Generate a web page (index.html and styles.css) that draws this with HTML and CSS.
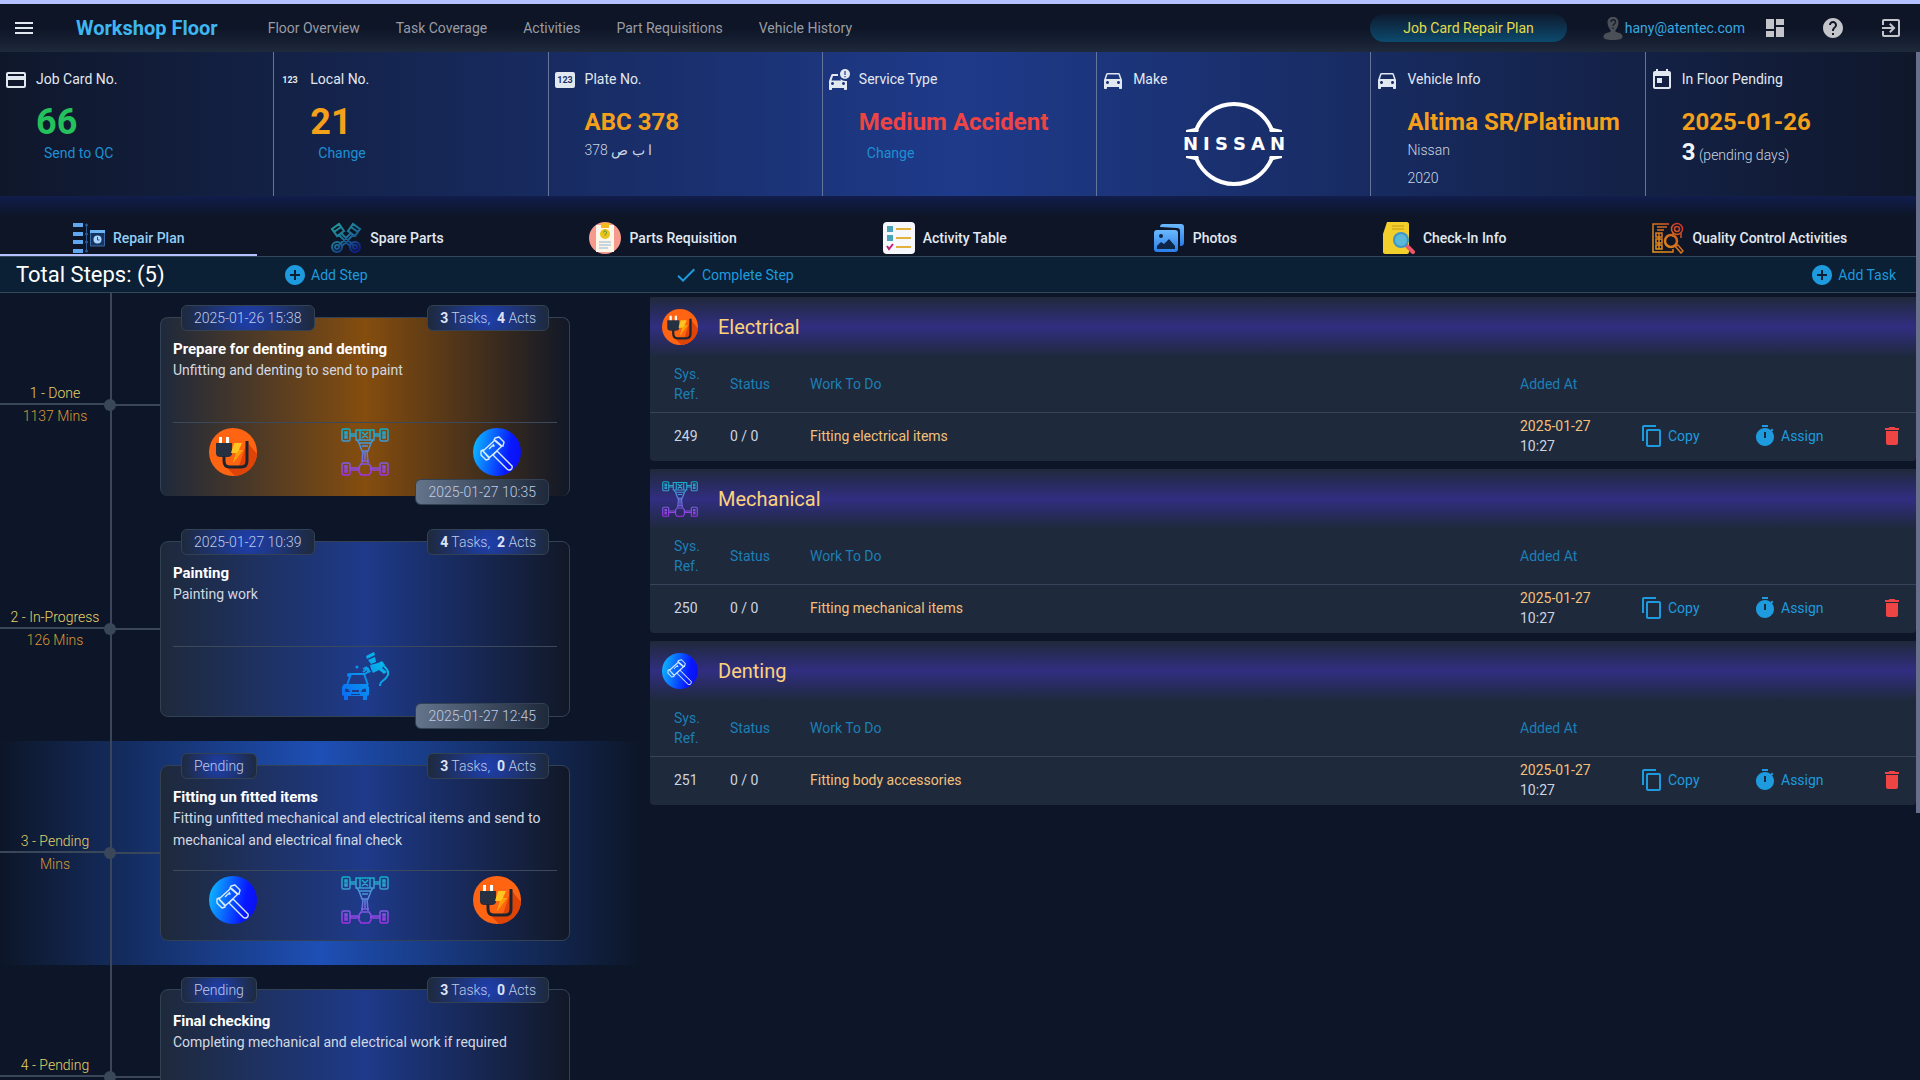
FILE: index.html
```
<!DOCTYPE html>
<html lang="en">

<head>
    <meta charset="UTF-8">
    <meta name="viewport" content="width=device-width, initial-scale=1.0">
    <title>Workshop Floor</title>
    <link rel="stylesheet" href="styles.css">
</head>

<body>
    <!-- shared icons -->
    <svg class="sprite" width="0" height="0" aria-hidden="true">
        <defs>
            <linearGradient id="g-axle" gradientUnits="userSpaceOnUse" x1="0" y1="0" x2="0" y2="48">
                <stop offset="0" stop-color="#0fb0c4" />
                <stop offset="0.45" stop-color="#5b8be0" />
                <stop offset="1" stop-color="#a32ee6" />
            </linearGradient>
            <linearGradient id="g-dent" x1="0" y1="0.4" x2="1" y2="0.6">
                <stop offset="0" stop-color="#0cb4ff" />
                <stop offset="0.75" stop-color="#0818ff" />
                <stop offset="1" stop-color="#0a10f0" />
            </linearGradient>
            <linearGradient id="g-paint" gradientUnits="userSpaceOnUse" x1="0" y1="44" x2="40" y2="10">
                <stop offset="0" stop-color="#0a6cf5" />
                <stop offset="1" stop-color="#08b4ea" />
            </linearGradient>
            <linearGradient id="g-piston" gradientUnits="userSpaceOnUse" x1="6" y1="2" x2="24" y2="30">
                <stop offset="0" stop-color="#1f9a9c" />
                <stop offset="0.5" stop-color="#1c6f95" />
                <stop offset="1" stop-color="#10208c" />
            </linearGradient>
            <linearGradient id="g-photo" x1="0" y1="0" x2="0" y2="1">
                <stop offset="0" stop-color="#6ab8ff" />
                <stop offset="1" stop-color="#2b7de8" />
            </linearGradient>
            <linearGradient id="g-quality" gradientUnits="userSpaceOnUse" x1="0" y1="32" x2="32" y2="0">
                <stop offset="0" stop-color="#e8a01c" />
                <stop offset="0.6" stop-color="#d2691e" />
                <stop offset="1" stop-color="#d02030" />
            </linearGradient>
        </defs>

        <symbol id="i-add" viewBox="0 0 24 24">
            <path d="M12 2C6.48 2 2 6.48 2 12s4.48 10 10 10 10-4.48 10-10S17.52 2 12 2zm5 11h-4v4h-2v-4H7v-2h4V7h2v4h4v2z" />
        </symbol>
        <symbol id="i-car" viewBox="0 0 24 24">
            <path d="M18.92 6.01C18.72 5.42 18.16 5 17.5 5h-11c-.66 0-1.21.42-1.42 1.01L3 12v8c0 .55.45 1 1 1h1c.55 0 1-.45 1-1v-1h12v1c0 .55.45 1 1 1h1c.55 0 1-.45 1-1v-8l-2.08-5.99zM6.5 16c-.83 0-1.5-.67-1.5-1.5S5.67 13 6.5 13s1.5.67 1.5 1.5S7.33 16 6.5 16zm11 0c-.83 0-1.5-.67-1.5-1.5s.67-1.5 1.5-1.5 1.5.67 1.5 1.5-.67 1.5-1.5 1.5zM5 11l1.5-4.5h11L19 11H5z" />
        </symbol>
        <symbol id="i-copy" viewBox="0 0 24 24">
            <path d="M16 1H4c-1.1 0-2 .9-2 2v14h2V3h12V1zm3 4H8c-1.1 0-2 .9-2 2v14c0 1.1.9 2 2 2h11c1.1 0 2-.9 2-2V7c0-1.1-.9-2-2-2zm0 16H8V7h11v14z" />
        </symbol>
        <symbol id="i-timer" viewBox="0 0 24 24">
            <path d="M9 1h6v2H9zM19.03 7.39l1.42-1.42c-.43-.51-.9-.99-1.41-1.41l-1.42 1.42C16.07 4.74 14.12 4 12 4c-4.97 0-9 4.03-9 9s4.02 9 9 9 9-4.03 9-9c0-2.12-.74-4.07-1.97-5.61zM13 14h-2V8h2v6z" />
        </symbol>
        <symbol id="i-trash" viewBox="0 0 24 24">
            <path d="M6 19c0 1.1.9 2 2 2h8c1.1 0 2-.9 2-2V7H6v12zM19 4h-3.5l-1-1h-5l-1 1H5v2h14V4z" />
        </symbol>

        <symbol id="i-electrical" viewBox="0 0 48 48">
            <circle cx="24" cy="24" r="24" fill="#ff6412" />
            <path d="M16 38l10 10c12-1 21-10 22-22L38 14 30 38z" fill="#e04306" />
            <path d="M10 9h3v8h-3zM17 9h3v8h-3z" fill="#ffffff" />
            <path d="M7 15h16v10c0 3-2 4-5 4h-6c-3 0-5-1-5-4z" fill="#263040" />
            <path d="M15 28v5c0 4 2 6 6 6h11c4 0 6-2 6-6V13" fill="none" stroke="#1d2430" stroke-width="3" />
            <path d="M25 15h8l-3 7h4L24 35l3-10h-5z" fill="#ffc420" />
            <path d="M30 22h4L24 35l3-9z" fill="#ff9d0a" />
        </symbol>
        <symbol id="i-axle" viewBox="0 0 48 48">
            <g fill="none" stroke="url(#g-axle)" stroke-width="1.5">
                <rect x="1" y="1" width="8" height="12" rx="1.5" />
                <rect x="39" y="1" width="8" height="12" rx="1.5" />
                <rect x="1" y="35" width="8" height="12" rx="1.5" />
                <rect x="39" y="35" width="8" height="12" rx="1.5" />
                <path d="M4 4h2v2H4zM4 8h2v2H4zM42 4h2v2h-2zM42 8h2v2h-2zM4 38h2v2H4zM4 42h2v2H4zM42 38h2v2h-2zM42 42h2v2h-2z" />
                <path d="M9 6h6M9 8h6M33 6h6M33 8h6M9 40h7l3 1M9 42h7l3 -1M39 40h-7l-3 1M39 42h-7l-3-1" />
                <path d="M15 2h18v10H15zM19 2v10M29 2v10M21 4l6 6M27 4l-6 6M16 12l2 3h12l2-3M18 15l3 8h6l3-8M21 18h6M22 23l-1 12M26 23l1 12M24 24v8M20 33h8" />
                <path d="M20 36h8l2 3v5l-2 3h-8l-2-3v-5z" />
            </g>
        </symbol>
        <symbol id="i-denting" viewBox="0 0 48 48">
            <circle cx="24" cy="24" r="24" fill="url(#g-dent)" />
            <g fill="none" stroke="#d6ecff" stroke-width="1.4" stroke-linejoin="round">
                <path d="M22 10l4-1 5 5-1 4-2 0-7-6zM10 22l-2 1 0 4 5 5 3-1 0-2-6-6zM22 12L10 23l6 7 13-12zM24 23l15 15c1 4-3 5-5 3L20 27z" />
                <path d="M16 21l3-3 2 0-1-2" />
            </g>
        </symbol>
        <symbol id="i-painting" viewBox="0 0 48 48">
            <g fill="none" stroke="url(#g-paint)" stroke-width="1.8">
                <path d="M6 33l4-11h13l4 11M22 20l5-4M22 17l4-2M24 22l4-3" />
                <path d="M43 14c6 6 5 9 1 13-4 3-5 4-5 7" stroke-width="2" />
            </g>
            <g fill="url(#g-paint)">
                <path d="M3 32h23l2 3v8l-2 1v4h-4v-4H7v4H3v-4l-2-1v-8z" />
                <circle cx="8" cy="23" r="2" />
                <circle cx="16" cy="15" r="1.5" />
                <path d="M25 4l8-4 1 3-8 4zM27 8l7-3 1 5-5 2zM29 13l8-2 4-2 3 4-3 3 5 4-3 2-5-4-6 3-2-4zM27 15l3 5-3 1-2-4z" />
            </g>
            <path d="M4 37c2-1 4 0 5 3H4zM25 37c-2-1-4 0-5 3h5zM11 38h7v2h-7zM10 42h9v1h-9z" fill="#1e3a8a" />
        </symbol>
    </svg>

    <header class="topbar">
        <button type="button" class="icon-button" aria-label="Menu">
            <svg viewBox="0 0 24 24" width="24" height="24"><path d="M3 18h18v-2H3v2zm0-5h18v-2H3v2zm0-7v2h18V6H3z" /></svg>
        </button>
        <h1 class="brand">Workshop Floor</h1>
        <nav class="nav">
            <a href="#">Floor Overview</a>
            <a href="#">Task Coverage</a>
            <a href="#">Activities</a>
            <a href="#">Part Requisitions</a>
            <a href="#">Vehicle History</a>
        </nav>
        <div class="pill">Job Card Repair Plan</div>
        <a href="#" class="user">
            <svg viewBox="0 0 20 24" width="22" height="24">
                <path d="M10 1c3.500 0 5.500 2 5.500 5.500S13.500 13 12.500 14v2c4 1 7 1.500 7 5 0 2-3 3-9.500 3S.5 23 .5 21c0-3.500 3-4 7-5v-2C6.500 13 4.500 10 4.500 6.500S6.500 1 10 1z" fill="#4b4f57" />
                <path d="M8 6c0-3 4.500-3 4.500 0 0 2-2.500 2-2.500 4M10 11.500v1.500" fill="none" stroke="#171d2a" stroke-width="1.3" />
            </svg>
            <span>hany@atentec.com</span>
        </a>
        <div class="tools">
            <button type="button" class="icon-button" aria-label="Dashboard">
                <svg viewBox="0 0 24 24" width="24" height="24"><path d="M3 13h8V3H3v10zm0 8h8v-6H3v6zm10 0h8V11h-8v10zm0-18v6h8V3h-8z" /></svg>
            </button>
            <button type="button" class="icon-button" aria-label="Help">
                <svg viewBox="0 0 24 24" width="24" height="24"><path d="M12 2C6.480 2 2 6.480 2 12s4.480 10 10 10 10-4.480 10-10S17.520 2 12 2zm1 17h-2v-2h2v2zm2.070-7.750l-.9.920C13.450 12.900 13 13.500 13 15h-2v-.5c0-1.100.450-2.100 1.170-2.830l1.240-1.260c.370-.360.590-.860.590-1.410 0-1.100-.9-2-2-2s-2 .9-2 2H8c0-2.210 1.790-4 4-4s4 1.790 4 4c0 .880-.360 1.680-.930 2.250z" /></svg>
            </button>
            <button type="button" class="icon-button" aria-label="Log out">
                <svg viewBox="0 0 24 24" width="24" height="24"><path d="M10.090 15.590L11.500 17l5-5-5-5-1.410 1.410L12.670 11H3v2h9.670l-2.580 2.590zM19 3H5c-1.110 0-2 .9-2 2v4h2V5h14v14H5v-4H3v4c0 1.100.890 2 2 2h14c1.100 0 2-.9 2-2V5c0-1.100-.9-2-2-2z" /></svg>
            </button>
        </div>
    </header>

    <main>
        <section class="summary">
            <div class="info">
                <svg viewBox="0 0 24 24" width="24" height="24"><path d="M20 4H4c-1.110 0-1.990.890-1.990 2L2 18c0 1.110.890 2 2 2h16c1.110 0 2-.890 2-2V6c0-1.110-.890-2-2-2zm0 14H4v-6h16v6zm0-10H4V6h16v2z" /></svg>
                <div>
                    <h2>Job Card No.</h2>
                    <p class="number green">66</p>
                    <button type="button" class="link">Send to QC</button>
                </div>
            </div>
            <div class="info">
                <svg viewBox="0 0 24 24" width="24" height="24"><text x="12" y="15" class="digits">123</text></svg>
                <div>
                    <h2>Local No.</h2>
                    <p class="number">21</p>
                    <button type="button" class="link">Change</button>
                </div>
            </div>
            <div class="info">
                <svg viewBox="0 0 24 24" width="24" height="24"><rect x="2" y="4" width="20" height="16" rx="2" /><text x="12" y="15" class="digits dark">123</text></svg>
                <div>
                    <h2>Plate No.</h2>
                    <p class="value">ABC 378</p>
                    <p class="small">378 ا ب ص</p>
                </div>
            </div>
            <div class="info">
                <svg viewBox="0 0 24 24" width="24" height="24">
                    <path d="M5 8h7c1 4 4 5 8 5v8c0 .6-.4 1-1 1h-1c-.6 0-1-.4-1-1v-1H5v1c0 .6-.4 1-1 1H3c-.6 0-1-.4-1-1v-8l2.200-6C4.400 6.400 5 6 5.500 6H11v2H6l-1.500 4.500H14L12 8zM5.500 14a1.500 1.500 0 1 0 .01 0zm11 0a1.500 1.500 0 1 0 .01 0z" fill-rule="evenodd" />
                    <circle cx="18" cy="6" r="5" />
                    <path d="M17.400 3h1.200v4h-1.200zM17.400 8h1.200v1.200h-1.200z" fill="#1e3a8a" />
                </svg>
                <div>
                    <h2>Service Type</h2>
                    <p class="value red">Medium Accident</p>
                    <button type="button" class="link">Change</button>
                </div>
            </div>
            <div class="info make">
                <svg width="24" height="24"><use href="#i-car" /></svg>
                <div>
                    <h2>Make</h2>
                    <svg class="nissan" viewBox="0 0 102 84" width="102" height="84" role="img" aria-label="Nissan">
                        <g fill="none" stroke="#ffffff" stroke-width="4">
                            <path d="M13 28C20 12 34 2 51 2s31 10 38 26" />
                            <path d="M13 56c7 16 21 26 38 26s31-10 38-26" />
                        </g>
                        <path d="M3 28l9-2 4 2-1 2H3zM99 28l-9-2-4 2 1 2h12zM3 56l9 2 4-2-1-2H3zM99 56l-9 2-4-2 1-2h12z" fill="#ffffff" />
                        <text x="0 20 32 50 68 87" y="48">NISSAN</text>
                    </svg>
                </div>
            </div>
            <div class="info">
                <svg width="24" height="24"><use href="#i-car" /></svg>
                <div>
                    <h2>Vehicle Info</h2>
                    <p class="value">Altima SR/Platinum</p>
                    <p class="small">Nissan</p>
                    <p class="small">2020</p>
                </div>
            </div>
            <div class="info">
                <svg viewBox="0 0 24 24" width="24" height="24"><path d="M19 3h-1V1h-2v2H8V1H6v2H5c-1.110 0-1.990.9-1.990 2L3 19c0 1.100.890 2 2 2h14c1.100 0 2-.9 2-2V5c0-1.100-.9-2-2-2zm0 16H5V8h14v11zM7 10h5v5H7v-5z" /></svg>
                <div>
                    <h2>In Floor Pending</h2>
                    <p class="value">2025-01-26</p>
                    <p class="days"><b>3</b> (pending days)</p>
                </div>
            </div>
        </section>

        <nav class="tabs">
            <a href="#" class="active">
                <svg viewBox="0 0 32 32" width="32" height="32">
                    <path d="M0 1h10v4H0zM0 10h10v4H0zM0 18h10v4H0zM0 27h10v4H0z" fill="#5fa8f0" />
                    <path d="M13.500 2v28" stroke="#2c5890" />
                    <circle cx="13.500" cy="3" r="1.500" fill="#2c5890" /><circle cx="13.500" cy="12" r="1.500" fill="#2c5890" /><circle cx="13.500" cy="20" r="1.500" fill="#2c5890" /><circle cx="13.500" cy="29" r="1.500" fill="#2c5890" />
                    <path d="M17.500 9h14v15h-14z" fill="#17345f" stroke="#3b6ba8" />
                    <path d="M17 8h15v3H17z" fill="#6bb4f5" />
                    <circle cx="24.500" cy="17.500" r="4" fill="#a9d4ff" />
                    <path d="M24.500 15v3h2" fill="none" stroke="#24508a" />
                </svg>
                Repair Plan
            </a>
            <a href="#">
                <svg viewBox="0 0 32 32" width="32" height="32">
                    <g fill="none" stroke="url(#g-piston)" stroke-width="2">
                        <path d="M2 7l7-5 5 7-7 5zM4 10l7-5M30 7l-7-5-5 7 7 5zM28 10l-7-5M11 11l12 12M9 13l12 12M21 11L9 23M23 13L11 25" />
                        <circle cx="7" cy="25" r="5" /><circle cx="7" cy="25" r="2" />
                        <circle cx="25" cy="25" r="5" /><circle cx="25" cy="25" r="2" />
                    </g>
                </svg>
                Spare Parts
            </a>
            <a href="#">
                <svg viewBox="0 0 32 32" width="32" height="32">
                    <circle cx="16" cy="16" r="16" fill="#f59a8c" />
                    <path d="M7 3h18v27H7z" fill="#fff6ea" />
                    <path d="M12 1h8v5h-8z" fill="#f2b920" />
                    <circle cx="16" cy="12" r="5" fill="#e8c41c" />
                    <path d="M14.500 10.500c0-2 3-2 3 0 0 1.500-1.500 1.500-1.500 3" fill="none" stroke="#3f8f4d" />
                    <path d="M10 20h12M10 23h12M10 26h9" stroke="#8cb6d8" />
                </svg>
                Parts Requisition
            </a>
            <a href="#">
                <svg viewBox="0 0 32 32" width="32" height="32">
                    <rect width="32" height="32" rx="4" fill="#f7f8fb" />
                    <path d="M4 4h6v6H4zM4 13h6v6H4z" fill="#4aa3ba" />
                    <path d="M13 7h15M13 16h15M13 25h15" stroke="#e3b23c" stroke-width="2" />
                    <path d="M4 24l2 3 4-5" fill="none" stroke="#c0207c" stroke-width="2" />
                </svg>
                Activity Table
            </a>
            <a href="#">
                <svg viewBox="0 0 32 32" width="32" height="32">
                    <path d="M7 5c0-2 1-3 3-3h18c2 0 3 1 3 3v15c0 3-1 4-4 4V9c0-2-1-3-3-3z" fill="url(#g-photo)" />
                    <rect x="1" y="8" width="24" height="22" rx="3" fill="url(#g-photo)" />
                    <circle cx="8" cy="14" r="2" fill="#0f2747" />
                    <path d="M4 27v-3l4-4 3 2 5-5 6 7v3z" fill="#0f2747" />
                </svg>
                Photos
            </a>
            <a href="#">
                <svg viewBox="0 0 32 32" width="32" height="32">
                    <path d="M4 0h20c1 0 2 1 2 2v28c0 1-1 2-2 2H2c-1 0-2-1-2-2V12z" fill="#f3cf2c" />
                    <path d="M9 4h12M9 7h12" stroke="#c99b14" />
                    <path d="M24 24l6 6" stroke="#f0566a" stroke-width="4" stroke-linecap="round" />
                    <circle cx="18" cy="18" r="8" fill="#3f95c8" />
                    <circle cx="18" cy="18" r="6" fill="#5bb8d6" />
                </svg>
                Check-In Info
            </a>
            <a href="#">
                <svg viewBox="0 0 32 32" width="32" height="32">
                    <g fill="none" stroke="url(#g-quality)" stroke-width="1.500">
                        <path d="M17 2H1v28h20v-3M5 5h10M5 8h7M4 11h6v4H4zM4 17h6v4H4zM4 23h6v4H4zM7 11v16" />
                        <circle cx="25" cy="7" r="5.500" /><circle cx="25" cy="7" r="2.500" />
                        <path d="M21 11v4M29 11v5" />
                        <circle cx="19" cy="19" r="6" stroke-width="2.500" />
                        <path d="M23 24l3-1 5 6-2 2z" />
                    </g>
                </svg>
                Quality Control Activities
            </a>
        </nav>

        <div class="toolbar">
            <div class="toolbar-left">
                <h2>Total Steps: (5)</h2>
                <button type="button" class="action"><svg width="24" height="24"><use href="#i-add" /></svg>Add Step</button>
            </div>
            <div class="toolbar-right">
                <button type="button" class="action"><svg viewBox="0 0 24 24" width="24" height="24"><path d="M9 16.170L4.830 12l-1.420 1.410L9 19 21 7l-1.410-1.410z" /></svg>Complete Step</button>
                <button type="button" class="action"><svg width="24" height="24"><use href="#i-add" /></svg>Add Task</button>
            </div>
        </div>

        <div class="plan">
            <section class="steps">
                <div class="step">
                    <div class="label"><span>1 - Done</span><span>1137 Mins</span></div>
                    <div class="rail"></div>
                    <article class="card done">
                        <span class="badge start">2025-01-26 15:38</span>
                        <span class="badge count"><b>3</b> Tasks,&nbsp; <b>4</b> Acts</span>
                        <h3>Prepare for denting and denting</h3>
                        <p>Unfitting and denting to send to paint</p>
                        <div class="trades">
                            <svg width="48" height="48"><use href="#i-electrical" /></svg>
                            <svg width="48" height="48"><use href="#i-axle" /></svg>
                            <svg width="48" height="48"><use href="#i-denting" /></svg>
                        </div>
                        <span class="badge end">2025-01-27 10:35</span>
                    </article>
                </div>
                <div class="step">
                    <div class="label"><span>2 - In-Progress</span><span>126 Mins</span></div>
                    <div class="rail"></div>
                    <article class="card">
                        <span class="badge start">2025-01-27 10:39</span>
                        <span class="badge count"><b>4</b> Tasks,&nbsp; <b>2</b> Acts</span>
                        <h3>Painting</h3>
                        <p>Painting work</p>
                        <div class="trades">
                            <svg width="48" height="48"><use href="#i-painting" /></svg>
                        </div>
                        <span class="badge end">2025-01-27 12:45</span>
                    </article>
                </div>
                <div class="step selected">
                    <div class="label"><span>3 - Pending</span><span>Mins</span></div>
                    <div class="rail"></div>
                    <article class="card">
                        <span class="badge start">Pending</span>
                        <span class="badge count"><b>3</b> Tasks,&nbsp; <b>0</b> Acts</span>
                        <h3>Fitting un fitted items</h3>
                        <p>Fitting unfitted mechanical and electrical items and send to mechanical and electrical final check</p>
                        <div class="trades">
                            <svg width="48" height="48"><use href="#i-denting" /></svg>
                            <svg width="48" height="48"><use href="#i-axle" /></svg>
                            <svg width="48" height="48"><use href="#i-electrical" /></svg>
                        </div>
                    </article>
                </div>
                <div class="step">
                    <div class="label"><span>4 - Pending</span><span></span></div>
                    <div class="rail"></div>
                    <article class="card">
                        <span class="badge start">Pending</span>
                        <span class="badge count"><b>3</b> Tasks,&nbsp; <b>0</b> Acts</span>
                        <h3>Final checking</h3>
                        <p>Completing mechanical and electrical work if required</p>
                        <div class="trades"></div>
                    </article>
                </div>
            </section>

            <section class="tasks">
                <article class="group">
                    <header>
                        <svg width="36" height="36"><use href="#i-electrical" /></svg>
                        <h2>Electrical</h2>
                    </header>
                    <table>
                        <thead>
                            <tr>
                                <th class="c-ref">Sys. Ref.</th>
                                <th class="c-status">Status</th>
                                <th>Work To Do</th>
                                <th class="c-added">Added At</th>
                                <th class="c-copy"></th>
                                <th class="c-assign"></th>
                                <th class="c-delete"></th>
                            </tr>
                        </thead>
                        <tbody>
                            <tr>
                                <td>249</td>
                                <td>0 / 0</td>
                                <td class="work">Fitting electrical items</td>
                                <td><span class="date">2025-01-27</span> 10:27</td>
                                <td><button type="button" class="action"><svg width="24" height="24"><use href="#i-copy" /></svg>Copy</button></td>
                                <td><button type="button" class="action"><svg width="24" height="24"><use href="#i-timer" /></svg>Assign</button></td>
                                <td><button type="button" class="action delete" aria-label="Delete"><svg width="24" height="24"><use href="#i-trash" /></svg></button></td>
                            </tr>
                        </tbody>
                    </table>
                </article>
                <article class="group">
                    <header>
                        <svg width="36" height="36"><use href="#i-axle" /></svg>
                        <h2>Mechanical</h2>
                    </header>
                    <table>
                        <thead>
                            <tr>
                                <th class="c-ref">Sys. Ref.</th>
                                <th class="c-status">Status</th>
                                <th>Work To Do</th>
                                <th class="c-added">Added At</th>
                                <th class="c-copy"></th>
                                <th class="c-assign"></th>
                                <th class="c-delete"></th>
                            </tr>
                        </thead>
                        <tbody>
                            <tr>
                                <td>250</td>
                                <td>0 / 0</td>
                                <td class="work">Fitting mechanical items</td>
                                <td><span class="date">2025-01-27</span> 10:27</td>
                                <td><button type="button" class="action"><svg width="24" height="24"><use href="#i-copy" /></svg>Copy</button></td>
                                <td><button type="button" class="action"><svg width="24" height="24"><use href="#i-timer" /></svg>Assign</button></td>
                                <td><button type="button" class="action delete" aria-label="Delete"><svg width="24" height="24"><use href="#i-trash" /></svg></button></td>
                            </tr>
                        </tbody>
                    </table>
                </article>
                <article class="group">
                    <header>
                        <svg width="36" height="36"><use href="#i-denting" /></svg>
                        <h2>Denting</h2>
                    </header>
                    <table>
                        <thead>
                            <tr>
                                <th class="c-ref">Sys. Ref.</th>
                                <th class="c-status">Status</th>
                                <th>Work To Do</th>
                                <th class="c-added">Added At</th>
                                <th class="c-copy"></th>
                                <th class="c-assign"></th>
                                <th class="c-delete"></th>
                            </tr>
                        </thead>
                        <tbody>
                            <tr>
                                <td>251</td>
                                <td>0 / 0</td>
                                <td class="work">Fitting body accessories</td>
                                <td><span class="date">2025-01-27</span> 10:27</td>
                                <td><button type="button" class="action"><svg width="24" height="24"><use href="#i-copy" /></svg>Copy</button></td>
                                <td><button type="button" class="action"><svg width="24" height="24"><use href="#i-timer" /></svg>Assign</button></td>
                                <td><button type="button" class="action delete" aria-label="Delete"><svg width="24" height="24"><use href="#i-trash" /></svg></button></td>
                            </tr>
                        </tbody>
                    </table>
                </article>
            </section>
        </div>
        <div class="scroll-thumb"></div>
    </main>
</body>

</html>
```
FILE: styles.css
```
* {
    box-sizing: border-box;
}

body {
    margin: 0;
    height: 100vh;
    overflow: hidden;
    display: flex;
    flex-direction: column;
    border-top: 4px solid #b4c0ff;
    background-color: #0d1628;
    color: #e2e8f0;
    font-family: Roboto, "Noto Sans", sans-serif;
    font-size: 14px;
    line-height: 20px;
}

h1,
h2,
h3,
p {
    margin: 0;
    font-weight: 400;
}

a {
    color: inherit;
    text-decoration: none;
}

button {
    font: inherit;
    color: inherit;
    background: none;
    border: none;
    padding: 0;
    cursor: pointer;
}

svg {
    fill: currentColor;
    flex: none;
    display: block;
}

.sprite {
    position: absolute;
}

/* top bar */
.topbar {
    display: flex;
    align-items: center;
    flex: none;
    height: 48px;
    padding: 0 17px 0 12px;
    background: linear-gradient(#0d1527 50%, #1e293b);
}

.brand {
    margin-left: 40px;
    font-size: 20px;
    font-weight: 700;
    color: #3fb6f0;
}

.nav {
    display: flex;
    gap: 36px;
    margin-left: 50px;
    margin-right: auto;
    color: #9a9ca3;
}

.pill {
    padding: 4px 33px;
    border-radius: 14px;
    background: linear-gradient(#0e1a2e, #0c4a6e);
    color: #e5dc4a;
}

.user {
    display: flex;
    align-items: center;
    gap: 1px;
    margin-left: 35px;
    color: #38a8e0;
}

.tools {
    display: flex;
    gap: 34px;
    margin-left: 18px;
    color: #c3c5cb;
}

/* job card summary */
main {
    position: relative;
    flex: 1;
    min-height: 0;
    display: flex;
    flex-direction: column;
}

.summary {
    display: grid;
    grid-template-columns: repeat(7, 1fr);
    flex: none;
    min-height: 144px;
    background: linear-gradient(90deg, #0f172a, #1e3a8a 50%, #0f172a);
}

.info {
    display: flex;
    gap: 8px;
    padding: 16px 4px 0;
    border-right: 1px solid #64749a;
}

.info:last-child {
    border-right: none;
}

.info > div {
    flex: 1;
    white-space: nowrap;
}

.info h2 {
    font-size: 14px;
    line-height: 22px;
    margin-bottom: 14px;
}

.number {
    font-size: 36px;
    font-weight: 700;
    line-height: 36px;
    color: #f5a01b;
}

.value {
    font-size: 24px;
    font-weight: 700;
    line-height: 36px;
    color: #f5a01b;
}

.green {
    color: #25c15c;
}

.red {
    color: #ef4444;
}

.link {
    margin-left: 8px;
    line-height: 26px;
    color: #1d90d2;
}

.small {
    line-height: 28px;
    font-weight: 300;
    color: #cbd5e1;
    margin-top: -4px;
    margin-bottom: 4px;
}

.days {
    color: #cbd5e1;
    font-weight: 300;
    line-height: 24px;
}

.days b {
    font-size: 24px;
    font-weight: 700;
    color: #f1f5f9;
}

.digits {
    font-size: 9px;
    font-weight: 700;
    text-anchor: middle;
}

.dark {
    fill: #1b2f6b;
}

.make > div {
    padding-right: 32px;
}

.make h2 {
    margin-bottom: 0;
}

.nissan {
    margin: 12px auto 0;
}

.nissan text {
    fill: #ffffff;
    font-family: "DejaVu Sans", sans-serif;
    font-size: 18px;
    font-weight: 700;
}

/* tabs */
.tabs {
    display: flex;
    flex: none;
    height: 61px;
    background: linear-gradient(#111d4c, #0d1527 20px);
    border-bottom: 1px solid #33485a;
}

.tabs a {
    flex: 1 1 auto;
    display: flex;
    align-items: center;
    justify-content: center;
    gap: 8px;
    padding-top: 26px;
    font-weight: 500;
    border-bottom: 2px solid transparent;
}

.tabs .active {
    color: #93cdf5;
    border-bottom-color: #b4c0ff;
}

/* toolbar */
.toolbar {
    display: grid;
    grid-template-columns: 1fr 2fr;
    flex: none;
    height: 36px;
    background-color: #0b1f35;
    border-bottom: 1px solid #33485a;
}

.toolbar-left,
.toolbar-right {
    display: flex;
    align-items: center;
    padding: 0 24px 0 16px;
}

.toolbar-right {
    justify-content: space-between;
    padding-left: 34px;
}

.toolbar-left h2 {
    width: 267px;
    font-size: 22px;
    color: #ffffff;
}

.action {
    display: inline-flex;
    align-items: center;
    gap: 4px;
    color: #1d9bde;
}

/* steps */
.plan {
    display: grid;
    grid-template-columns: 1fr 2fr;
    flex: 1;
    min-height: 0;
    overflow: hidden;
}

.step {
    display: grid;
    grid-template-columns: 110px 50px 1fr;
}

.selected {
    background: linear-gradient(90deg, #0d1628, #1e4fb5 50%, #0d1628);
}

.label {
    display: grid;
    grid-template-rows: 1fr 1fr;
    text-align: center;
    font-weight: 300;
}

.label span:first-child {
    display: flex;
    align-items: flex-end;
    justify-content: center;
    border-bottom: 2px solid #3a475b;
    color: #e3d36a;
}

.label span:last-child {
    padding-top: 1px;
    color: #d99a33;
}

.rail {
    position: relative;
    border-left: 2px solid #3a475b;
    background: linear-gradient(#3a475b, #3a475b) center / 100% 2px no-repeat;
}

.rail::before {
    content: "";
    position: absolute;
    left: -8px;
    top: calc(50% - 6px);
    width: 12px;
    height: 12px;
    border-radius: 50%;
    background-color: #3a475b;
}

.card {
    position: relative;
    display: flex;
    flex-direction: column;
    min-height: 176px;
    margin: 24px 70px 24px 0;
    padding: 21px 12px 0;
    border: 1px solid #334155;
    border-radius: 8px;
    background: linear-gradient(90deg, #1e293b, #1e3a8a 50%, #111827);
}

.done {
    min-height: 179px;
    margin-bottom: 21px;
    padding-bottom: 4px;
    border-bottom: none;
    background: linear-gradient(90deg, #1e293b, #854d0e 50%, #111827);
}

.card h3 {
    font-size: 15px;
    font-weight: 700;
    line-height: 20px;
    color: #ffffff;
}

.card p {
    line-height: 22px;
    color: #d3d9e3;
}

.trades {
    display: flex;
    justify-content: center;
    gap: 84px;
    margin-top: auto;
    height: 70px;
    padding-top: 5px;
    border-top: 1px solid #3c495c;
}

.badge {
    position: absolute;
    padding: 1px 12px;
    border: 1px solid #334155;
    border-radius: 6px;
    background: radial-gradient(circle, #1e3fae, #1e293b);
    color: #bfcbe6;
    font-weight: 300;
    line-height: 22px;
}

.badge b {
    font-weight: 700;
    color: #dbe4f5;
}

.start {
    top: -13px;
    left: 20px;
}

.count {
    top: -13px;
    right: 20px;
}

.end {
    bottom: -13px;
    right: 20px;
    background: linear-gradient(90deg, #64748b, #1e293b);
}

.done .end {
    bottom: -9px;
}

/* task groups */
.tasks {
    display: flex;
    flex-direction: column;
    gap: 8px;
    padding: 4px 4px 0 10px;
}

.group {
    border-radius: 4px;
    background-color: #1e293b;
}

.group header {
    display: flex;
    align-items: center;
    gap: 20px;
    height: 60px;
    padding: 0 12px;
    background: linear-gradient(#1f293b, #312e81 50%, #1e293b);
}

.group h2 {
    font-size: 20px;
    color: #fcd37a;
}

table {
    width: 100%;
    table-layout: fixed;
    border-collapse: collapse;
}

th {
    height: 55px;
    padding: 0 0 0 24px;
    text-align: left;
    font-weight: 400;
    color: #1c7fb6;
    border-bottom: 1px solid #35445a;
}

td {
    height: 49px;
    padding: 0 0 2px 24px;
    color: #cbd5e1;
}

td .action {
    padding-top: 5px;
}

.c-ref {
    width: 56px;
}

.c-status {
    width: 80px;
}

.c-added {
    width: 120px;
}

.c-copy {
    width: 113px;
}

.c-assign {
    width: 127px;
}

.c-delete {
    width: 60px;
}

.work,
.date {
    color: #f3c07c;
}

td .delete {
    color: #ef4444;
}

/* scroll position of the main area */
.scroll-thumb {
    position: absolute;
    top: 0;
    right: 0;
    width: 4px;
    height: 74%;
    background-color: #696e8a;
}
```
